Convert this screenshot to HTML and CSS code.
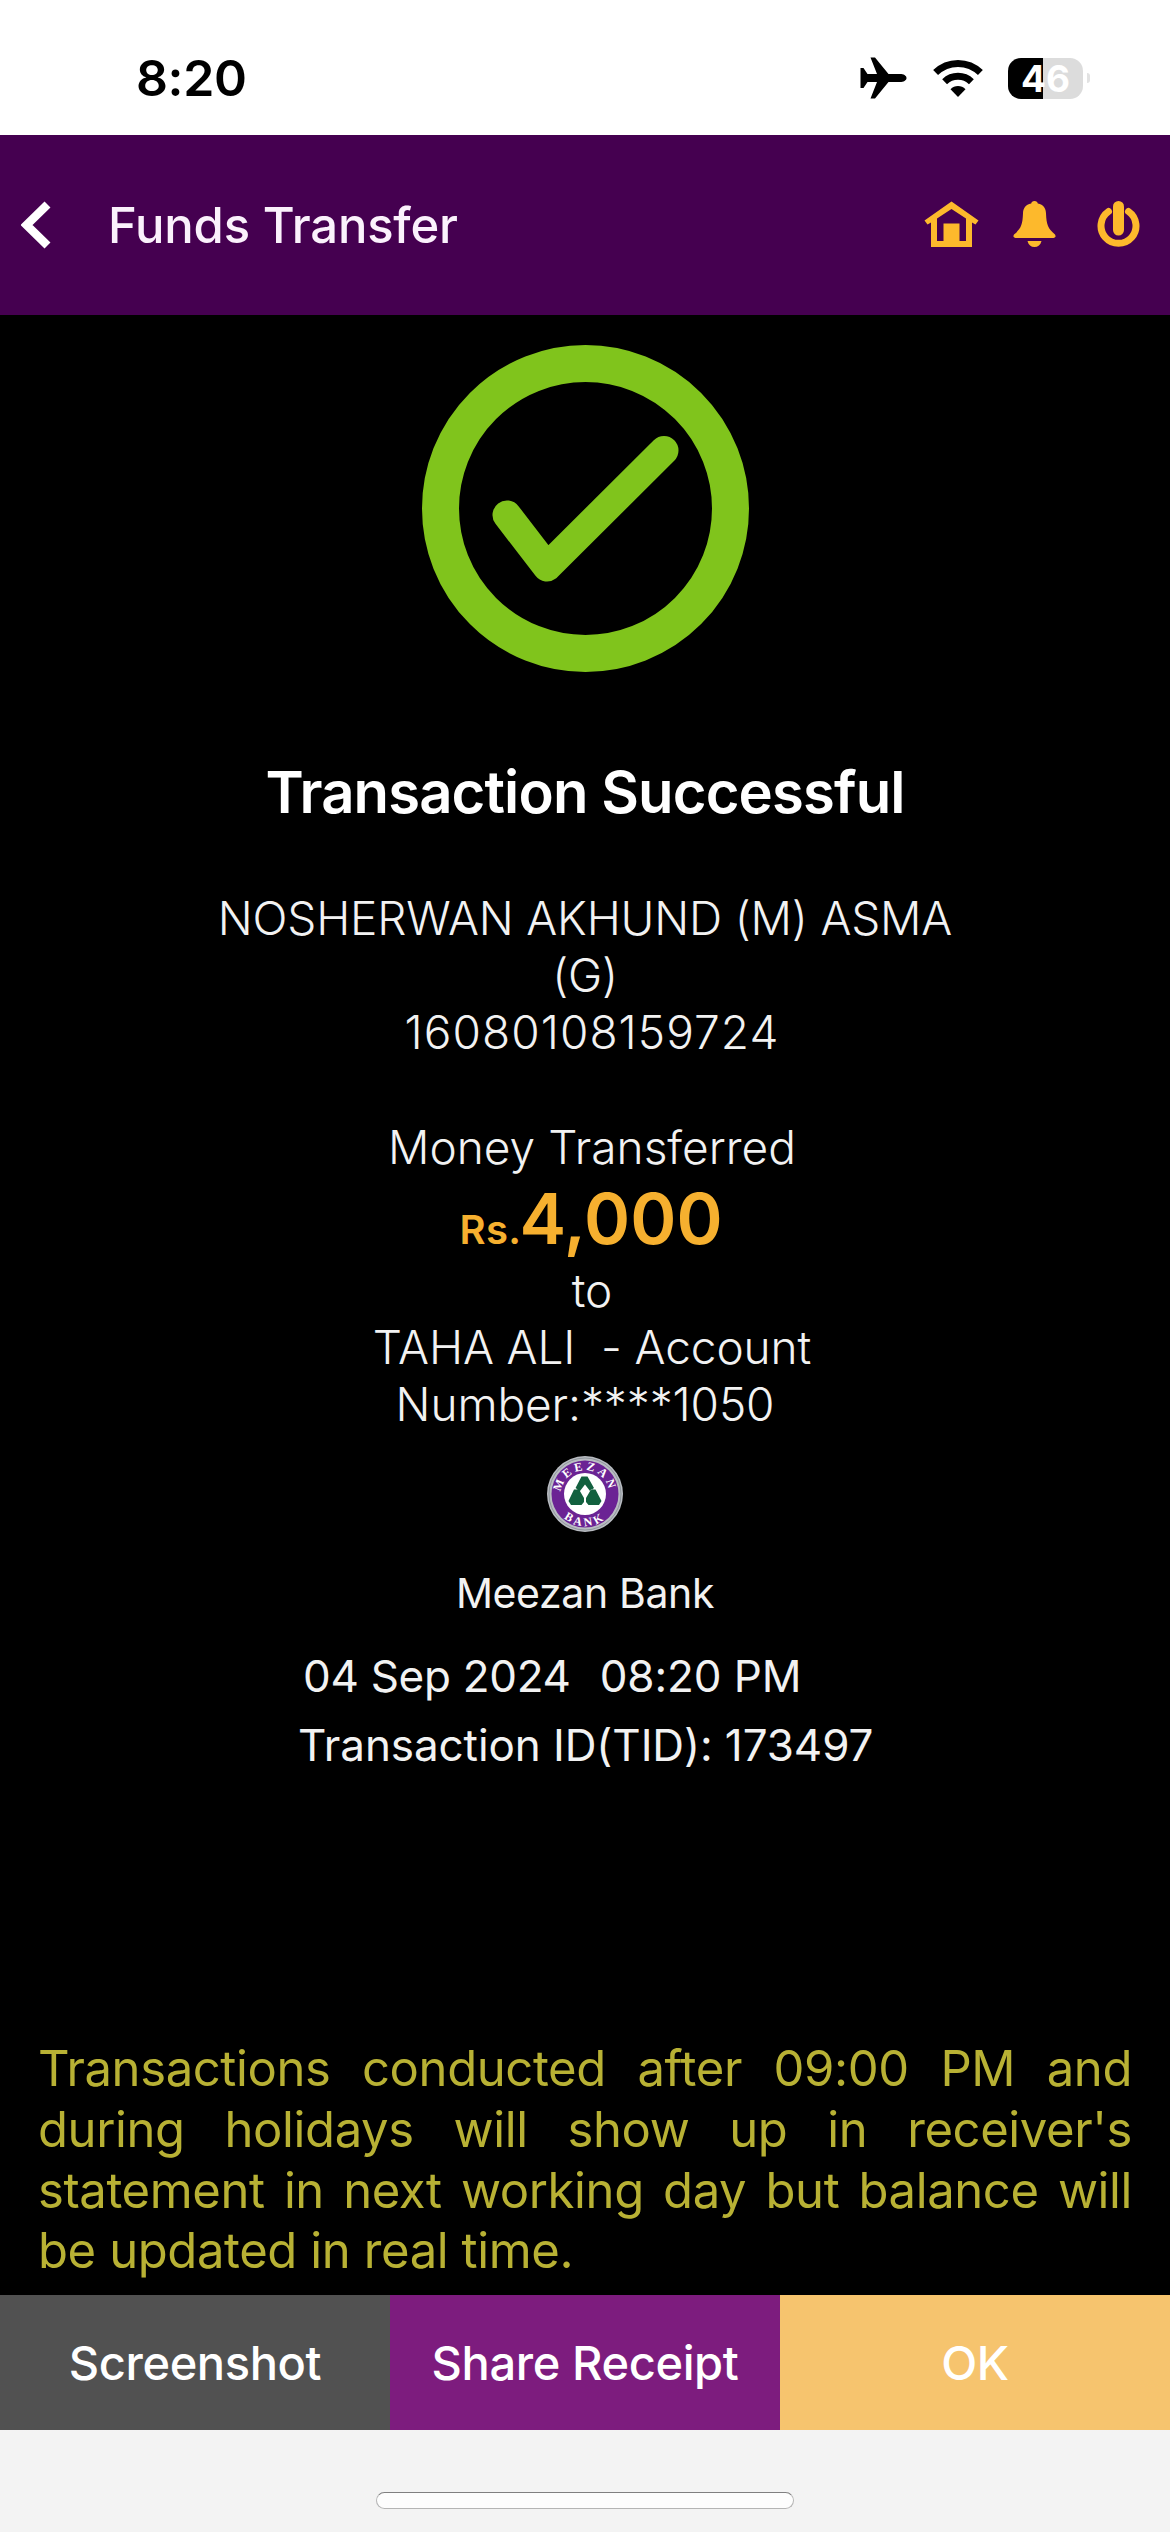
FILE: index.html
```html
<!DOCTYPE html>
<html lang="en">
<head>
<meta charset="utf-8">
<meta name="viewport" content="width=device-width">
<title>Funds Transfer</title>
<link rel="stylesheet" href="styles.css">
</head>
<body>
<div class="screen">
  <div class="status-bar">
    <span class="clock">8:20</span>
    <svg class="plane" viewBox="0 0 47 42" aria-hidden="true"><path d="M46.5 21C46.500 23.500 43.500 25 40 25H28.500L15 41.500H10.500L17 25H7.500L3.500 31H.5V11H3.500L7.500 17H17L10.500.5H15L28.500 17H40C43.500 17 46.500 18.500 46.500 21Z"/></svg>
    <svg class="wifi" viewBox="0 0 50 38" aria-hidden="true"><path class="arc" d="M2.600 13.600A32 32 0 0 1 47.400 13.600M11.600 22.700A19.500 19.500 0 0 1 38.400 22.700"/><path d="M25 38 17.500 30.300C21.500 26 28.500 26 32.500 30.300Z"/></svg>
    <div class="battery"><span class="battery-level">46</span></div>
    <span class="battery-nub"></span>
  </div>

  <header class="app-bar">
    <svg class="back" viewBox="0 0 30 48" aria-label="Back"><path d="M26.500 3.500 5.500 24 26.500 44.500"/></svg>
    <h1 class="app-title">Funds Transfer</h1>
    <svg class="home" viewBox="0 0 55 46" aria-label="Home"><path d="M27.500.5 54.500 19.500 51.500 23.500 48 21.500V46H7V21.500L3.500 23.500.5 19.500ZM27.500 8 13 17.500V40H19.500V22.500H35.500V40H42V17.500Z"/></svg>
    <svg class="bell" viewBox="0 0 43 46" aria-label="Notifications"><path d="M21.500 0C23.500 0 24.500 1.200 24.800 2.500 30.500 3.500 33 7.500 33 12.500 33.500 24 35 27.500 42 33.500Q44 37 39 37H4Q-1 37 1 33.500C8 27.500 9.500 24 10 12.500 10 7.500 12.500 3.500 18.200 2.500 18.500 1.200 19.500 0 21.500 0ZM14.500 40H28.500C27.500 44 25 46 21.500 46S15.500 44 14.500 40Z"/></svg>
    <svg class="power" viewBox="0 0 43 46" aria-label="Log out"><path class="ring" d="M11.500 10.500A17.500 17.500 0 1 0 31.500 10.500"/><path class="bar" d="M21.500 5.500V29"/></svg>
  </header>

  <main class="receipt">
    <svg class="success" viewBox="0 0 327 327" aria-hidden="true"><circle cx="163.500" cy="163.500" r="145"/><path d="M85 170 125 222 242 105.500"/></svg>
    <h2 class="title">Transaction Successful</h2>

    <div class="party">
      <div class="sender">NOSHERWAN AKHUND (M) ASMA (G)</div>
      <div class="account">16080108159724</div>
    </div>

    <div class="transfer">
      <div class="line">Money Transferred</div>
      <div class="amount"><span class="currency">Rs.</span>4,000</div>
      <div class="line">to</div>
      <div class="receiver">TAHA ALI&nbsp; - Account Number:****1050</div>
    </div>

    <svg class="bank-logo" viewBox="0 0 78 78" aria-hidden="true">
      <defs>
        <path id="arc-top" d="M15.300 43A24 24 0 1 1 62.700 43"/>
        <path id="arc-bottom" d="M7 39A32 32 0 0 0 71 39"/>
      </defs>
      <circle cx="39" cy="39" r="38" fill="#b9bcc2"/>
      <circle cx="39" cy="39" r="36" fill="none" stroke="#8f969c" stroke-width="1"/>
      <circle cx="39" cy="39" r="33.500" fill="#6b2394"/>
      <circle cx="39" cy="39" r="21" fill="#fff"/>
      <text class="logo-text"><textPath href="#arc-top" startOffset="50%">MEEZAN</textPath></text>
      <text class="logo-text"><textPath href="#arc-bottom" startOffset="50%">BANK</textPath></text>
      <path fill="#12603f" d="M35.500 21.500H41.500L48 33 44 36 39 29.500 34 36 29.500 33ZM28 34.500 33 34.500 38 43V47L35.500 50H25L22.500 46ZM49.500 34.500 45 34.500 40 43V47L42.500 50H53L55.500 46Z"/>
    </svg>

    <div class="bank">Meezan Bank</div>
    <div class="meta">
      <div class="stamp"><span class="date">04 Sep 2024</span><span>08:20 PM</span></div>
      <div class="tid">Transaction ID(TID): 173497</div>
    </div>

    <p class="notice">Transactions conducted after 09:00 PM and during holidays will show up in receiver's statement in next working day but balance will be updated in real time.</p>
  </main>

  <div class="actions">
    <button class="action shot">Screenshot</button>
    <button class="action share">Share Receipt</button>
    <button class="action ok">OK</button>
  </div>
  <div class="home-area"><div class="home-indicator"></div></div>
</div>
</body>
</html>
```
FILE: styles.css
```css
* {
  box-sizing: border-box;
}

body {
  margin: 0;
  background: #000;
  font-family: Inter, "Liberation Sans", sans-serif;
}

.screen {
  display: flex;
  flex-direction: column;
  width: 1170px;
  height: 2532px;
  overflow: hidden;
}

svg {
  display: block;
  flex: none;
}

/* Status bar */
.status-bar {
  display: flex;
  align-items: center;
  height: 135px;
  padding: 21px 80px 0 136px;
  background: #fff;
}

.clock {
  margin-right: auto;
  font-size: 50px;
  font-weight: 600;
  letter-spacing: -0.4px;
  line-height: 60px;
}

.plane {
  width: 47px;
  height: 42px;
  margin-right: 26px;
}

.wifi {
  width: 50px;
  height: 38px;
  margin-right: 25px;
}

.wifi .arc {
  fill: none;
  stroke: #000;
  stroke-width: 7;
}

.battery {
  display: flex;
  align-items: center;
  justify-content: center;
  width: 75px;
  height: 41px;
  border-radius: 13px;
  background: linear-gradient(90deg, #000 35.5px, #dcdcdc 35.5px);
}

.battery-level {
  color: #fff;
  font-size: 37px;
  font-weight: 700;
  line-height: 41px;
}

.battery-nub {
  width: 3px;
  height: 10px;
  margin-left: 4px;
  border-radius: 0 5px 5px 0;
  background: #e2e2e2;
}

/* App bar */
.app-bar {
  display: flex;
  align-items: center;
  height: 180px;
  padding: 0 30px 2px 21px;
  background: #450050;
}

.back {
  width: 30px;
  height: 48px;
  margin: 2px 57px 0 0;
  fill: none;
  stroke: #fff;
  stroke-width: 8.5;
}

.app-title {
  margin: 0 auto 0 0;
  padding-top: 4px;
  color: #fbf1fc;
  font-size: 49px;
  font-weight: 500;
  letter-spacing: -0.2px;
  line-height: 60px;
}

.home,
.bell,
.power {
  height: 46px;
  fill: #fdb92c;
}

.home {
  width: 55px;
  margin-right: 34px;
  fill-rule: evenodd;
}

.bell {
  width: 43px;
  margin-right: 41px;
}

.power {
  width: 43px;
}

.power path {
  fill: none;
  stroke: #fdb92c;
  stroke-linecap: round;
}

.power .ring {
  stroke-width: 7;
}

.power .bar {
  stroke-width: 11;
}

/* Receipt */
.receipt {
  display: flex;
  flex: 1;
  flex-direction: column;
  align-items: center;
  padding: 30px 38px 13px;
  background: #000;
  color: #f2f2f2;
  text-align: center;
}

.success {
  width: 327px;
  height: 327px;
  fill: none;
  stroke: #80c41c;
  stroke-linecap: round;
  stroke-linejoin: round;
}

.success circle {
  stroke-width: 37;
}

.success path {
  stroke-width: 29;
}

.title {
  margin: 85px 0 0;
  color: #fff;
  font-size: 58px;
  font-weight: 600;
  letter-spacing: -0.87px;
  line-height: 70px;
}

.party,
.transfer {
  font-size: 46px;
  font-weight: 300;
  line-height: 57px;
}

.party {
  width: 740px;
  margin-top: 63px;
}

.sender {
  letter-spacing: -0.17px;
}

.account {
  padding-left: 14px;
  letter-spacing: 1.08px;
}

.transfer {
  width: 460px;
  margin-top: 58px;
}

.line {
  padding-left: 14px;
}

.amount {
  height: 86px;
  padding-left: 12px;
  color: #f6b02f;
  font-size: 70px;
  font-weight: 600;
  line-height: 86px;
  white-space: nowrap;
}

.currency {
  margin-right: -2px;
  font-size: 40px;
  letter-spacing: 0.4px;
  line-height: 1;
}

.receiver {
  letter-spacing: -0.1px;
  text-indent: 14px;
}

.bank-logo {
  width: 78px;
  height: 78px;
  margin-top: 22px;
}

.logo-text {
  fill: #fff;
  font-family: "Liberation Serif", serif;
  font-size: 12px;
  font-weight: 700;
  letter-spacing: 3px;
  text-anchor: middle;
}

.bank {
  margin-top: 35px;
  font-size: 41px;
  letter-spacing: -0.37px;
  line-height: 50px;
}

.meta {
  display: flex;
  flex-direction: column;
  align-items: flex-start;
  gap: 15px;
  width: 574px;
  margin-top: 31px;
  font-size: 44px;
  line-height: 54px;
  white-space: nowrap;
}

.stamp {
  display: flex;
  gap: 29px;
  padding-left: 5px;
  letter-spacing: -0.1px;
}

.date {
  letter-spacing: -0.3px;
}

.tid {
  letter-spacing: -0.09px;
}

.notice {
  width: 100%;
  margin: auto 0 0;
  color: #b8b134;
  font-size: 49px;
  letter-spacing: -0.4px;
  line-height: 60.7px;
  text-align: justify;
}

/* Bottom actions */
.actions {
  display: grid;
  grid-template-columns: repeat(3, 1fr);
  height: 135px;
}

.action {
  border: 0;
  padding: 0;
  color: #fff;
  font-family: inherit;
  font-size: 47px;
  font-weight: 500;
  letter-spacing: -0.38px;
}

.shot {
  background: #515151;
}

.share {
  background: #7d1c7e;
}

.ok {
  background: #f6c46e;
}

.home-area {
  display: flex;
  align-items: flex-start;
  justify-content: center;
  height: 102px;
  padding-top: 62px;
  background: #f3f3f3;
}

.home-indicator {
  width: 418px;
  height: 17px;
  border: 1px solid #b5b5b5;
  border-top-color: #808080;
  border-radius: 9px;
  background: #fdfdfd;
}
```
